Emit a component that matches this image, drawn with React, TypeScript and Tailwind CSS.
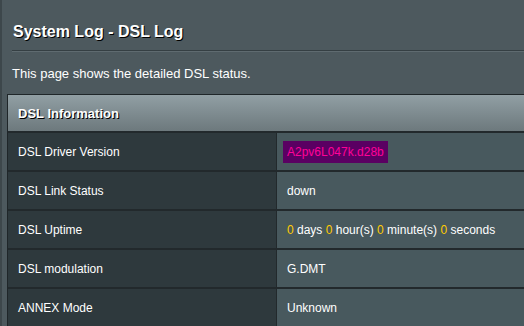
import React from "react";

const Y = ({ children }: { children: React.ReactNode }) => (
  <span className="text-[#ffcc00]">{children}</span>
);

const rows: { label: string; value: React.ReactNode }[] = [
  {
    label: "DSL Driver Version",
    value: (
      <span className="bg-[#5a0062] text-[#ff0099] ml-[-4px] px-[4px] py-[2px]">A2pv6L047k.d28b</span>
    ),
  },
  { label: "DSL Link Status", value: "down" },
  {
    label: "DSL Uptime",
    value: (
      <span>
        <Y>0</Y> days <Y>0</Y> hour(s) <Y>0</Y> minute(s) <Y>0</Y> seconds
      </span>
    ),
  },
  { label: "DSL modulation", value: "G.DMT" },
  { label: "ANNEX Mode", value: "Unknown" },
];

export default function App() {
  return (
    <div
      className="w-[524px] h-[326px] overflow-hidden bg-[#4d595e] flex text-white"
      style={{ fontFamily: '"Liberation Sans", Arial, sans-serif' }}
    >
      <div className="w-[2px] bg-[#3d474b] shrink-0" />
      <div className="flex-1 flex flex-col pl-[5px]">
        <div className="pl-[6px] pt-[22px] h-[52px]">
          <div className="text-[16px] font-bold leading-[19px] [text-shadow:1px_1px_0_#000]">
            System Log - DSL Log
          </div>
        </div>
        <div className="ml-[5px] h-[1px] bg-[#353f43]" />
        <div className="ml-[5px] h-[1px] bg-[#5f6b70]" />
        <div className="pl-[5px] pt-[14px] h-[44px] text-[13px] leading-[15px]">
          This page shows the detailed DSL status.
        </div>
        <div className="border-l border-t border-[#1f2629] flex flex-col">
          <div className="h-[36px] bg-gradient-to-b from-[#919fa4] to-[#6d797d] flex items-center pl-[10px] pt-[1px] text-[13px] font-bold [text-shadow:1px_1px_0_#000]">
            DSL Information
          </div>
          {rows.map((r) => (
            <div key={r.label} className="flex h-[39px] border-t-2 border-[#22292c]">
              <div className="w-[269px] shrink-0 bg-[#2e393d] border-r border-[#22292c] flex items-center pl-[10px] text-[12px]">
                {r.label}
              </div>
              <div className="flex-1 bg-[#48595e] flex items-center pl-[10px] text-[12px]">
                {r.value}
              </div>
            </div>
          ))}
        </div>
      </div>
    </div>
  );
}
